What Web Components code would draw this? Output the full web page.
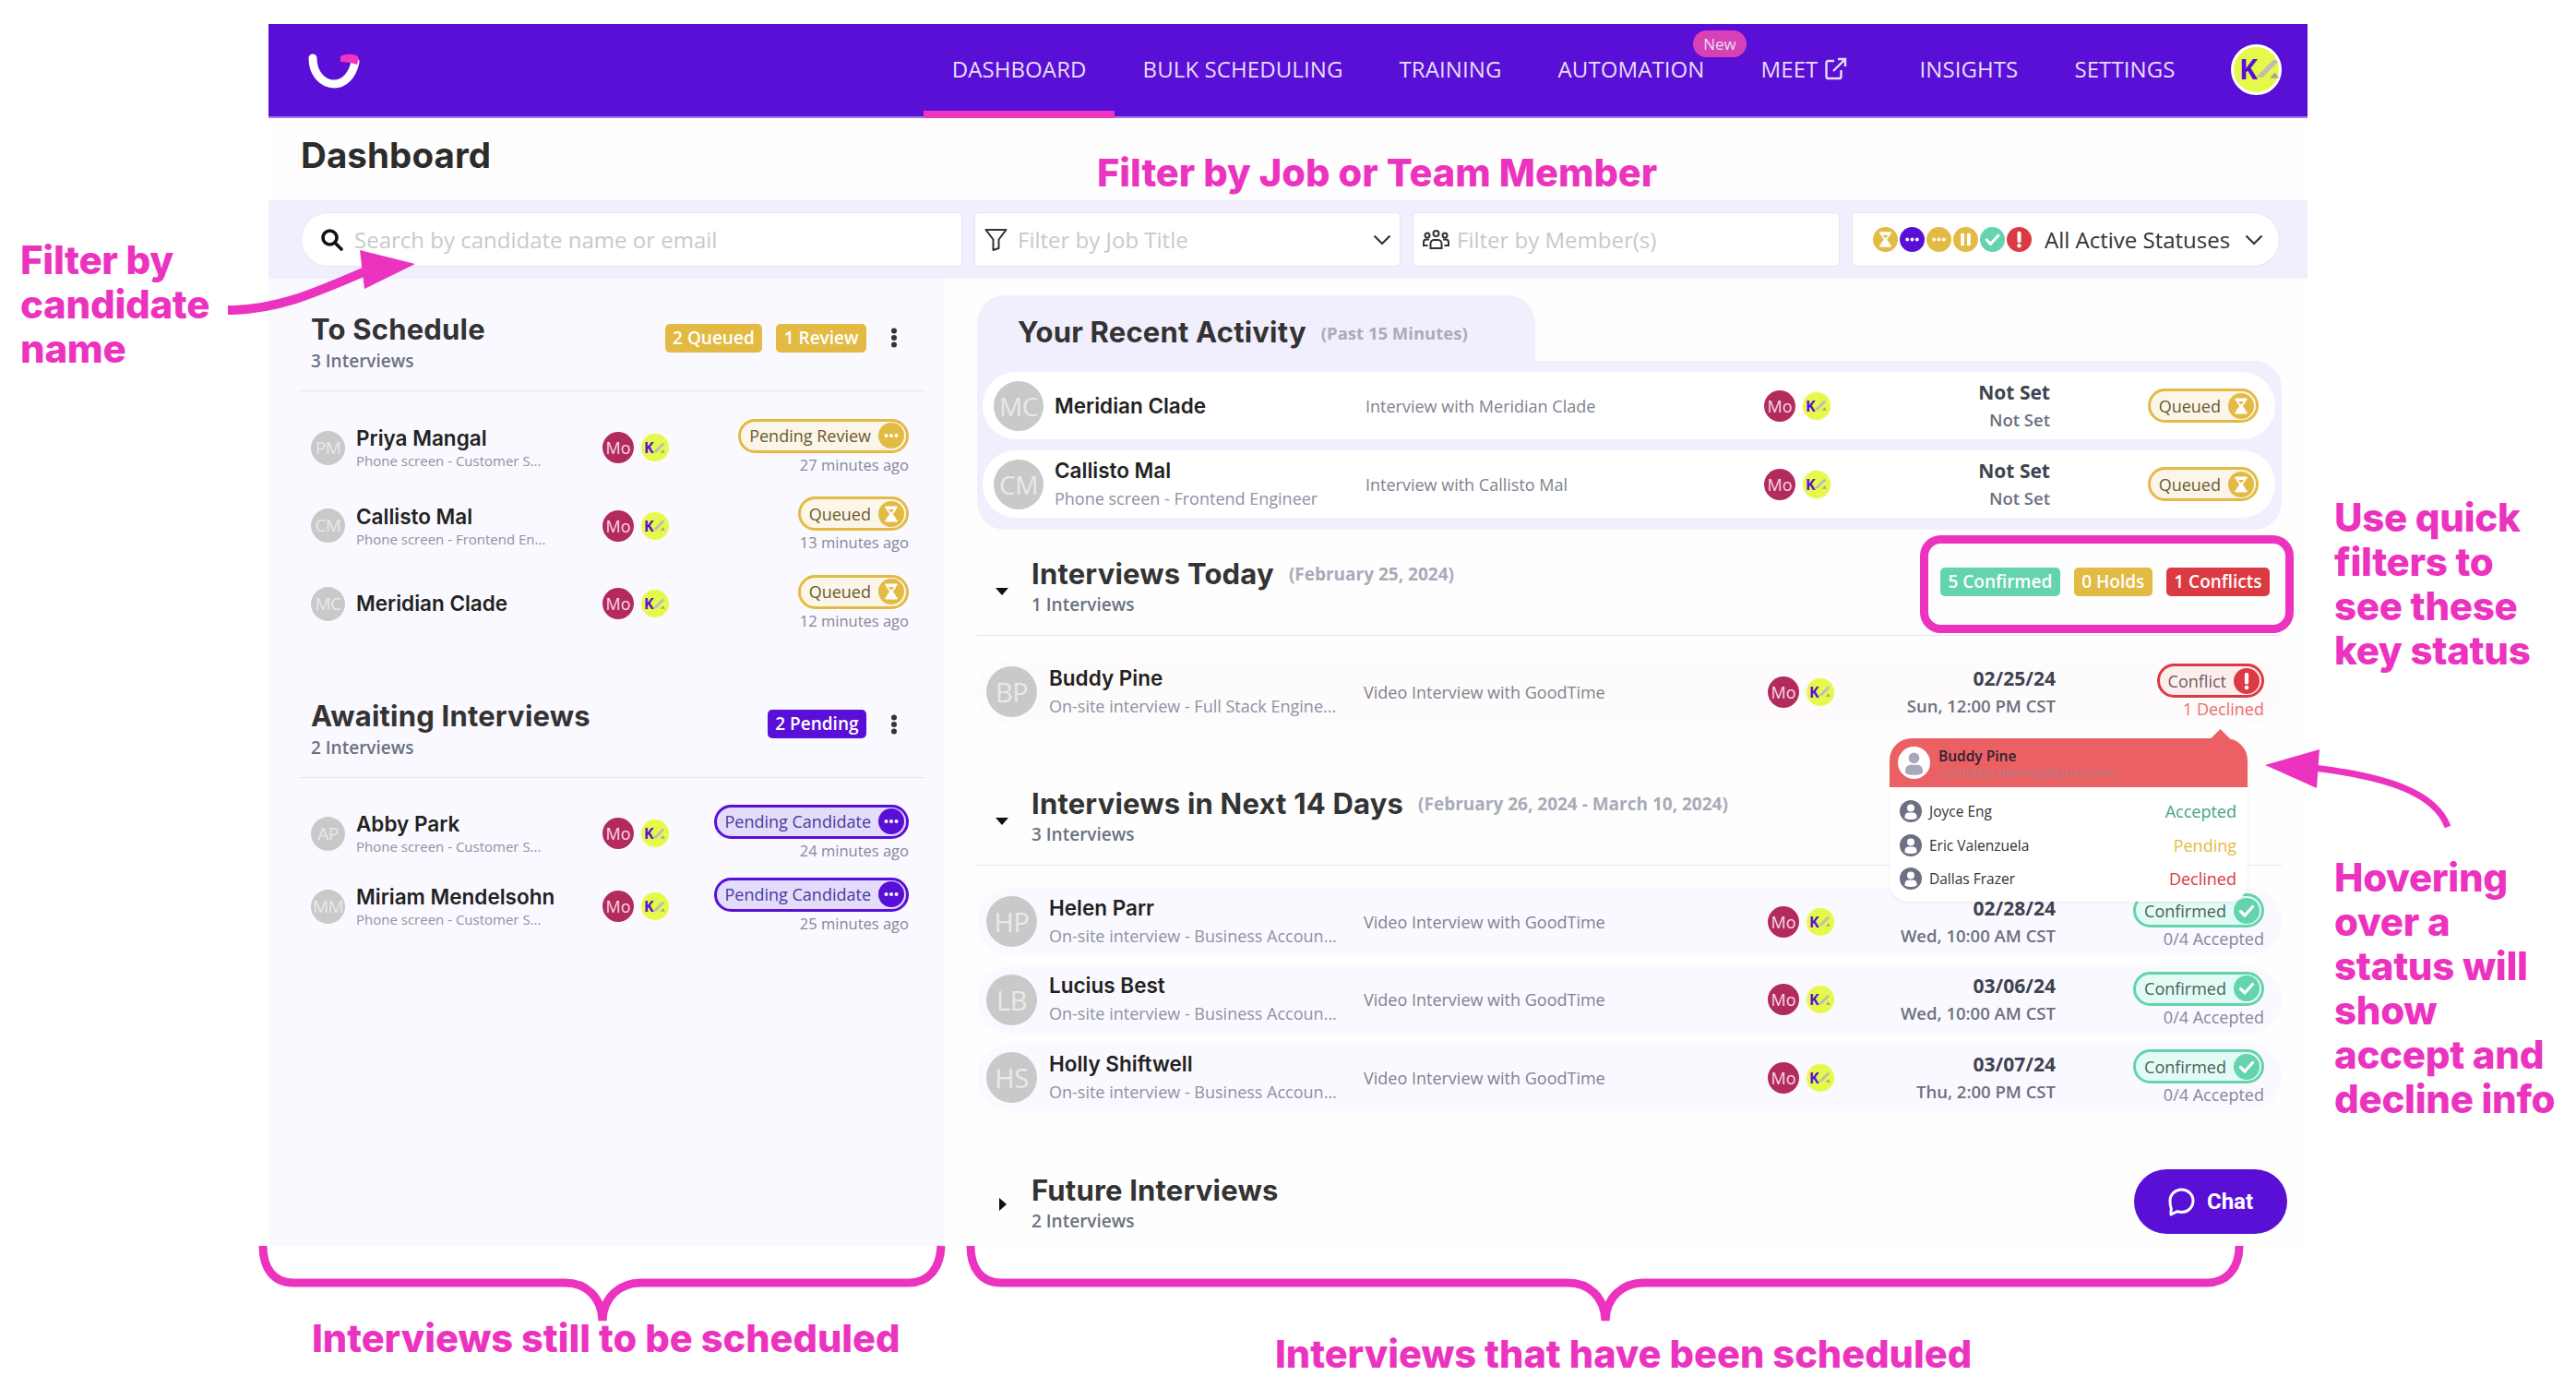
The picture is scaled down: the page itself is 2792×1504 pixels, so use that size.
<!DOCTYPE html>
<html lang="en">
<head>
<meta charset="utf-8">
<title>Dashboard</title>
<style>
  html, body { margin: 0; padding: 0; background: #fff; }
  body { position: relative; width: 2792px; height: 1504px; overflow: hidden; font-family: "Open Sans", "Noto Sans", sans-serif; color: #333; }
  .hdg-badges { display: flex; gap: 15px; align-items: center; }
</style>
</head>
<body>
<gt-app>
  <gt-nav slot="nav">
    <gt-nav-item active>DASHBOARD</gt-nav-item>
    <gt-nav-item>BULK SCHEDULING</gt-nav-item>
    <gt-nav-item>TRAINING</gt-nav-item>
    <gt-nav-item flag="New">AUTOMATION</gt-nav-item>
    <gt-nav-item external>MEET</gt-nav-item>
    <gt-nav-item>INSIGHTS</gt-nav-item>
    <gt-nav-item>SETTINGS</gt-nav-item>
  </gt-nav>

  <gt-filter-bar slot="filters"></gt-filter-bar>

  <gt-side-section slot="side" heading="To Schedule" count="3 Interviews" style="--row-h:84.5px;--head-top:37px;--rows-top:19px">
    <gt-badge slot="badges" color="#e3ba43">2 Queued</gt-badge>
    <gt-badge slot="badges" color="#e3ba43">1 Review</gt-badge>
    <gt-side-row initials="PM" name="Priya Mangal" sub="Phone screen - Customer S..." time="27 minutes ago"><gt-status slot="status" kind="review">Pending Review</gt-status></gt-side-row>
    <gt-side-row initials="CM" name="Callisto Mal" sub="Phone screen - Frontend En..." time="13 minutes ago"><gt-status slot="status" kind="queued">Queued</gt-status></gt-side-row>
    <gt-side-row initials="MC" name="Meridian Clade" time="12 minutes ago"><gt-status slot="status" kind="queued">Queued</gt-status></gt-side-row>
  </gt-side-section>

  <gt-side-section slot="side" heading="Awaiting Interviews" count="2 Interviews" style="--row-h:79px;--head-top:61px;--rows-top:21px">
    <gt-badge slot="badges" color="#5a0fd6">2 Pending</gt-badge>
    <gt-side-row initials="AP" name="Abby Park" sub="Phone screen - Customer S..." time="24 minutes ago"><gt-status slot="status" kind="candidate">Pending Candidate</gt-status></gt-side-row>
    <gt-side-row initials="MM" name="Miriam Mendelsohn" sub="Phone screen - Customer S..." time="25 minutes ago"><gt-status slot="status" kind="candidate">Pending Candidate</gt-status></gt-side-row>
  </gt-side-section>

  <gt-recent slot="main">
    <gt-row recent initials="MC" name="Meridian Clade" detail="Interview with Meridian Clade" date="Not Set" when="Not Set"><gt-status slot="status" kind="queued">Queued</gt-status></gt-row>
    <gt-row recent initials="CM" name="Callisto Mal" sub="Phone screen - Frontend Engineer" detail="Interview with Callisto Mal" date="Not Set" when="Not Set"><gt-status slot="status" kind="queued">Queued</gt-status></gt-row>
  </gt-recent>

  <gt-section slot="main" heading="Interviews Today" range="(February 25, 2024)" count="1 Interviews" style="--sec-top:30px">
    <div slot="badges" class="hdg-badges">
      <gt-badge color="#63d4ad">5 Confirmed</gt-badge>
      <gt-badge color="#e3ba43">0 Holds</gt-badge>
      <gt-badge color="#dc3a42">1 Conflicts</gt-badge>
    </div>
    <gt-row tint="#fdfbfb" initials="BP" name="Buddy Pine" sub="On-site interview - Full Stack Engine..." detail="Video Interview with GoodTime" date="02/25/24" when="Sun, 12:00 PM CST" note="1 Declined" notecolor="#ef6b6b"><gt-status slot="status" kind="conflict">Conflict</gt-status></gt-row>
  </gt-section>

  <gt-section slot="main" heading="Interviews in Next 14 Days" range="(February 26, 2024 - March 10, 2024)" count="3 Interviews" style="--sec-top:67px">
    <gt-row initials="HP" name="Helen Parr" sub="On-site interview - Business Accoun..." detail="Video Interview with GoodTime" date="02/28/24" when="Wed, 10:00 AM CST" note="0/4 Accepted"><gt-status slot="status" kind="confirmed">Confirmed</gt-status></gt-row>
    <gt-row initials="LB" name="Lucius Best" sub="On-site interview - Business Accoun..." detail="Video Interview with GoodTime" date="03/06/24" when="Wed, 10:00 AM CST" note="0/4 Accepted"><gt-status slot="status" kind="confirmed">Confirmed</gt-status></gt-row>
    <gt-row initials="HS" name="Holly Shiftwell" sub="On-site interview - Business Accoun..." detail="Video Interview with GoodTime" date="03/07/24" when="Thu, 2:00 PM CST" note="0/4 Accepted"><gt-status slot="status" kind="confirmed">Confirmed</gt-status></gt-row>
  </gt-section>

  <gt-section slot="main" closed heading="Future Interviews" count="2 Interviews" style="--sec-top:68px"></gt-section>

  <gt-popover slot="over" name="Buddy Pine" email="candidate.demogt@gmail.com">
    <gt-attendee name="Joyce Eng" state="Accepted" color="#3fa57f"></gt-attendee>
    <gt-attendee name="Eric Valenzuela" state="Pending" color="#e3ba43"></gt-attendee>
    <gt-attendee name="Dallas Frazer" state="Declined" color="#d83a44"></gt-attendee>
  </gt-popover>
  <gt-chat slot="over">Chat</gt-chat>
</gt-app>

<gt-notes></gt-notes>

<script>
const ICONS = {
  hourglass: `<path d="M7.500 5.500h13v2.500h-1.300c0 3-3.200 4.300-3.200 6s3.200 3 3.200 6h1.300v2.500h-13V20h1.300c0-3 3.200-4.300 3.200-6S8.800 11 8.800 8H7.500z" fill="#fff"/><path d="M11 9h6c-.4 1.500-2 2.400-3 3.500-1-1.100-2.600-2-3-3.500z" fill="currentColor"/>`,
  dots: `<circle cx="8.500" cy="14" r="2" fill="#fff"/><circle cx="14" cy="14" r="2" fill="#fff"/><circle cx="19.500" cy="14" r="2" fill="#fff"/>`,
  pause: `<rect x="8.500" y="7" width="4" height="14" rx="1" fill="#fff"/><rect x="15.500" y="7" width="4" height="14" rx="1" fill="#fff"/>`,
  check: `<path d="M7.500 14.500l4.500 4.500 8.500-9.500" fill="none" stroke="#fff" stroke-width="3.200" stroke-linecap="round" stroke-linejoin="round"/>`,
  bang: `<rect x="11.900" y="5" width="4.200" height="12.500" rx="1.800" fill="#fff"/><circle cx="14" cy="21" r="2.300" fill="#fff"/>`
};

const STATUS = {
  queued: { border: "#e3ba43", bg: "#fbf6e9", text: "#6b5a2c", icon: "hourglass" },
  review: { border: "#e3ba43", bg: "#fbf6e9", text: "#6b5a2c", icon: "dots" },
  candidate: { border: "#5a0fd6", bg: "#e3dcfb", text: "#4a3a9c", icon: "dots" },
  conflict: { border: "#dc3a42", bg: "#fdeeee", text: "#6e5c5e", icon: "bang" },
  confirmed: { border: "#63d4ad", bg: "#e3fbf5", text: "#47635b", icon: "check" }
};

function personSvg(bg, fg, size) {
  return `<svg width="${size}" height="${size}" viewBox="0 0 24 24"><circle cx="12" cy="12" r="12" fill="${bg}"/><circle cx="12" cy="8.500" r="4" fill="${fg}"/><path d="M5.500 19.500v-2c0-2.500 2-4 4-4h5c2 0 4 1.500 4 4v2c-2 1.300-4 1.600-6.500 1.600s-4.500-.3-6.500-1.600z" fill="${fg}"/></svg>`;
}

class GtApp extends HTMLElement {
  constructor() {
    super();
    this.attachShadow({ mode: "open" });
  }
  connectedCallback() {
    this.shadowRoot.innerHTML = `
      <style>
        :host { display: block; width: 2210px; height: 1324px; margin: 26px 0 0 291px; background: #fefefe; }
        .title { height: 89px; box-sizing: border-box; padding: 17px 0 0 35px; font: 700 38.500px/46px Inter, sans-serif; letter-spacing: .1px; color: #2c2c2c; }
        .content { display: grid; grid-template-columns: 732px 1478px; height: 1048px; }
        .side { background: #faf9ff; }
        .main { position: relative; padding: 18px 28px 0 36px; }
      </style>
      <slot name="nav"></slot>
      <div class="title">Dashboard</div>
      <slot name="filters"></slot>
      <div class="content">
        <div class="side"><slot name="side"></slot></div>
        <div class="main"><slot name="main"></slot><slot name="over"></slot></div>
      </div>
    `;
  }
}
customElements.define("gt-app", GtApp);

class GtNav extends HTMLElement {
  constructor() {
    super();
    this.attachShadow({ mode: "open" });
  }
  connectedCallback() {
    this.shadowRoot.innerHTML = `
      <style>
        :host { display: flex; align-items: stretch; height: 102px; box-sizing: border-box; background: #5a0fd6; border-bottom: 2px solid #9a78e6; padding: 0 28px 0 43px; }
        .logo { align-self: center; margin-top: 1px; }
        .items { display: flex; margin-left: auto; align-items: stretch; }
        .me { align-self: center; margin: -2px 0 0 30px; }
      </style>
      <svg class="logo" width="56" height="40" viewBox="0 0 56 40">
        <path d="M5 6c0 17 11 28 23 28 11 0 20-9 23-24" fill="none" stroke="#fff" stroke-width="9" stroke-linecap="round"/>
        <path d="M35 4c5-3 14-3 19 0 1 3 0 6-1 9-6-2-12-3-18-3z" fill="#ee35bf"/>
      </svg>
      <div class="items"><slot></slot></div>
      <gt-k-avatar class="me" size="55" ring></gt-k-avatar>
    `;
  }
}
customElements.define("gt-nav", GtNav);

class GtNavItem extends HTMLElement {
  constructor() {
    super();
    this.attachShadow({ mode: "open" });
  }
  connectedCallback() {
    const flag = this.getAttribute("flag");
    const ext = this.hasAttribute("external");
    this.shadowRoot.innerHTML = `
      <style>
        :host { display: flex; align-items: center; gap: 7px; position: relative; padding: 0 30.500px 4px; font: 400 24px "Open Sans", sans-serif; letter-spacing: .1px; color: #e6def8; white-space: nowrap; }
        :host([external]) { margin-right: 17px; }
        :host([active])::after { content: ""; position: absolute; left: 0; right: 0; bottom: -2px; height: 8px; background: #ee35bf; }
        .flag { position: absolute; top: 7px; right: -15px; width: 58px; height: 29px; border-radius: 14.500px; background: #d741b5; font-size: 17px; line-height: 29px; text-align: center; letter-spacing: 0; }
      </style>
      <slot></slot>
      ${flag ? `<span class="flag">${flag}</span>` : ""}
      ${ext ? `<svg width="25" height="25" viewBox="0 0 25 25" fill="none" stroke="#e6def8" stroke-width="2.400"><path d="M11 4H4.500a2 2 0 0 0-2 2v15a2 2 0 0 0 2 2h12a2 2 0 0 0 2-2v-7"/><path d="M10 15L22 3M15 2h8v8"/></svg>` : ""}
    `;
  }
}
customElements.define("gt-nav-item", GtNavItem);

class GtKAvatar extends HTMLElement {
  constructor() {
    super();
    this.attachShadow({ mode: "open" });
  }
  connectedCallback() {
    const s = Number(this.getAttribute("size") || 30);
    const ring = this.hasAttribute("ring");
    this.shadowRoot.innerHTML = `
      <style>
        :host { display: block; flex: none; }
        .c { width: ${s}px; height: ${s}px; box-sizing: border-box; border-radius: 50%; background: #e6f94a; display: flex; align-items: center; padding-left: ${Math.round(s * .1)}px; ${ring ? "border: 3px solid #fff;" : "box-shadow: 0 0 0 1px #fafbe6;"} }
        span { font: 700 ${Math.round(s * .54)}px/1 "Open Sans", sans-serif; color: #5a0fd6; }
        svg { flex: none; width: ${Math.round(s * .44)}px; height: ${Math.round(s * .44)}px; margin-left: -1px; }
      </style>
      <div class="c"><span>K</span>
        <svg viewBox="0 0 22 22"><path d="M0 18L15 3c1.500-1.500 3.500-1.500 5 0l1 1L6 19H1z" fill="#bdbdb4"/><path d="M13 20l5-6 4 6z" fill="#a3a69b"/></svg>
      </div>
    `;
  }
}
customElements.define("gt-k-avatar", GtKAvatar);

class GtTeam extends HTMLElement {
  constructor() {
    super();
    this.attachShadow({ mode: "open" });
  }
  connectedCallback() {
    this.shadowRoot.innerHTML = `
      <style>
        :host { display: flex; align-items: center; gap: 8px; }
        .mo { width: 34px; height: 34px; border-radius: 50%; background: #b32a5c; color: #f5dbe5; font-size: 18px; line-height: 34px; text-align: center; }
      </style>
      <div class="mo">Mo</div>
      <gt-k-avatar size="30"></gt-k-avatar>
    `;
  }
}
customElements.define("gt-team", GtTeam);

class GtAvatar extends HTMLElement {
  constructor() {
    super();
    this.attachShadow({ mode: "open" });
  }
  connectedCallback() {
    const s = Number(this.getAttribute("size") || 37);
    this.shadowRoot.innerHTML = `
      <style>
        :host { display: block; flex: none; }
        div { width: ${s}px; height: ${s}px; border-radius: 50%; background: #c9c9c9; color: #e9e9e9; font-size: ${Math.round(s * .52)}px; line-height: ${s}px; text-align: center; letter-spacing: -.5px; }
      </style>
      <div>${this.getAttribute("initials") || ""}</div>
    `;
  }
}
customElements.define("gt-avatar", GtAvatar);

class GtIcon extends HTMLElement {
  constructor() {
    super();
    this.attachShadow({ mode: "open" });
  }
  connectedCallback() {
    const c = this.getAttribute("color");
    const s = this.getAttribute("size") || 28;
    this.shadowRoot.innerHTML = `
      <style>:host { display: block; flex: none; width: ${s}px; height: ${s}px; color: ${c}; } svg { display: block; }</style>
      <svg width="${s}" height="${s}" viewBox="0 0 28 28"><circle cx="14" cy="14" r="14" fill="currentColor"/>${ICONS[this.getAttribute("name")]}</svg>
    `;
  }
}
customElements.define("gt-icon", GtIcon);

class GtStatus extends HTMLElement {
  constructor() {
    super();
    this.attachShadow({ mode: "open" });
  }
  connectedCallback() {
    const st = STATUS[this.getAttribute("kind")];
    this.shadowRoot.innerHTML = `
      <style>
        :host { display: inline-flex; align-items: center; gap: 8px; height: 37px; box-sizing: border-box; padding: 0 2px 0 9px; border: 3px solid ${st.border}; border-radius: 19px; background: ${st.bg}; color: ${st.text}; font: 400 18px "Open Sans", sans-serif; white-space: nowrap; }
      </style>
      <slot></slot>
      <gt-icon name="${st.icon}" color="${st.border}"></gt-icon>
    `;
  }
}
customElements.define("gt-status", GtStatus);

class GtBadge extends HTMLElement {
  constructor() {
    super();
    this.attachShadow({ mode: "open" });
  }
  connectedCallback() {
    this.shadowRoot.innerHTML = `
      <style>
        :host { display: block; height: 31px; padding: 0 8.500px; border-radius: 5px; background: ${this.getAttribute("color")}; color: #fff; font: 600 19px/30px "Open Sans", sans-serif; white-space: nowrap; }
      </style>
      <slot></slot>
    `;
  }
}
customElements.define("gt-badge", GtBadge);

class GtField extends HTMLElement {
  constructor() {
    super();
    this.attachShadow({ mode: "open" });
  }
  connectedCallback() {
    this.shadowRoot.innerHTML = `
      <style>
        :host { display: flex; align-items: center; box-sizing: border-box; height: 59px; background: #fff; border: 1px solid #e6e6ee; border-radius: 5px; color: #c9c9c9; font: 400 24px "Open Sans", sans-serif; white-space: nowrap; }
        :host([shape=left]) { border-radius: 30px 5px 5px 30px; }
        :host([shape=right]) { border-radius: 5px 30px 30px 5px; }
      </style>
      <slot></slot>
    `;
  }
}
customElements.define("gt-field", GtField);

class GtFilterBar extends HTMLElement {
  constructor() {
    super();
    this.attachShadow({ mode: "open" });
  }
  connectedCallback() {
    const chevron = `<svg class="chev" width="20" height="12" viewBox="0 0 20 12" fill="none" stroke="#333" stroke-width="2.200"><path d="M1.500 1.500L10 10l8.500-8.500"/></svg>`;
    this.shadowRoot.innerHTML = `
      <style>
        :host { display: grid; grid-template-columns: 717px 462px 463px 464px; gap: 13px; height: 85px; box-sizing: border-box; padding: 13px 0 0 35px; background: #f1effd; }
        gt-field svg { flex: none; }
        .chev { margin-left: auto; margin-right: 9px; }
        .icons { display: flex; gap: 2px; margin-right: 14px; }
        .sel { color: #333; }
        #s { padding-left: 20px; gap: 12px; }
        #j { padding-left: 10px; gap: 11px; }
        #m { padding-left: 10px; gap: 8px; }
        #a { padding-left: 22px; }
        #a .chev { margin: 0 0 0 16px; }
      </style>
      <gt-field id="s" shape="left">
        <svg width="25" height="25" viewBox="0 0 25 25" fill="none" stroke="#111" stroke-width="3.600"><circle cx="10.500" cy="10.500" r="7.500"/><path d="M16 16l7 7" stroke-linecap="round"/></svg>
        <span>Search by candidate name or email</span>
      </gt-field>
      <gt-field id="j">
        <svg width="25" height="25" viewBox="0 0 25 25" fill="none" stroke="#333" stroke-width="2"><path d="M1.500 2h22l-8 10.500V22l-6 2V12.500z" stroke-linejoin="round"/></svg>
        <span>Filter by Job Title</span>
        ${chevron}
      </gt-field>
      <gt-field id="m">
        <svg width="29" height="22" viewBox="0 0 29 22" fill="none" stroke="#333" stroke-width="2"><circle cx="14.500" cy="4" r="3"/><circle cx="5" cy="6" r="2.500"/><circle cx="24" cy="6" r="2.500"/><path d="M8.500 20v-5c0-2.500 2-4 4-4h4c2 0 4 1.500 4 4v5z"/><path d="M5.500 17H1v-3.500C1 11.500 2.500 10.500 4 10.500h3M23.500 17H28v-3.500c0-2-1.500-3-3-3h-3"/></svg>
        <span>Filter by Member(s)</span>
      </gt-field>
      <gt-field id="a" shape="right">
        <div class="icons">
          <gt-icon name="hourglass" color="#e3ba43" size="27"></gt-icon>
          <gt-icon name="dots" color="#5a0fd6" size="27"></gt-icon>
          <gt-icon name="dots" color="#e3ba43" size="27"></gt-icon>
          <gt-icon name="pause" color="#e3ba43" size="27"></gt-icon>
          <gt-icon name="check" color="#63d4ad" size="27"></gt-icon>
          <gt-icon name="bang" color="#dc3a42" size="27"></gt-icon>
        </div>
        <span class="sel">All Active Statuses</span>
        ${chevron}
      </gt-field>
    `;
  }
}
customElements.define("gt-filter-bar", GtFilterBar);

class GtSideSection extends HTMLElement {
  constructor() {
    super();
    this.attachShadow({ mode: "open" });
  }
  connectedCallback() {
    this.shadowRoot.innerHTML = `
      <style>
        :host { display: block; padding-top: var(--head-top); }
        .head { display: flex; align-items: center; margin: 0 20px 0 33px; padding: 0 30px 18px 13px; border-bottom: 1px solid #e7e7ef; }
        .t { flex: 1; }
        h2 { margin: 0; font: 700 31px/36px Inter, sans-serif; letter-spacing: .2px; color: #333; }
        p { margin: 2px 0 0; font: 600 19px/28px "Open Sans", sans-serif; color: #6b7280; }
        .badges { display: flex; gap: 15px; margin: 0 26px 12px 0; }
        svg { margin-bottom: 12px; }
        .rows { padding-top: var(--rows-top); }
      </style>
      <div class="head">
        <div class="t"><h2>${this.getAttribute("heading")}</h2><p>${this.getAttribute("count")}</p></div>
        <div class="badges"><slot name="badges"></slot></div>
        <svg width="8" height="22" viewBox="0 0 8 22" fill="#333"><circle cx="4" cy="3.500" r="3"/><circle cx="4" cy="11" r="3"/><circle cx="4" cy="18.500" r="3"/></svg>
      </div>
      <div class="rows"><slot></slot></div>
    `;
  }
}
customElements.define("gt-side-section", GtSideSection);

class GtSideRow extends HTMLElement {
  constructor() {
    super();
    this.attachShadow({ mode: "open" });
  }
  connectedCallback() {
    const sub = this.getAttribute("sub");
    this.shadowRoot.innerHTML = `
      <style>
        :host { display: flex; align-items: center; height: var(--row-h); padding: 0 38px 0 46px; }
        .who { width: 267px; flex: none; padding-left: 12px; }
        .name { font: 600 22.500px/28px Inter, sans-serif; color: #222; white-space: nowrap; }
        .sub { font: 400 15px/20px "Open Sans", sans-serif; color: #8f92a3; }
        .right { margin-left: auto; display: flex; flex-direction: column; align-items: flex-end; }
        .time { font: 400 16.500px/26px "Open Sans", sans-serif; color: #85889a; }
      </style>
      <gt-avatar size="37" initials="${this.getAttribute("initials")}"></gt-avatar>
      <div class="who"><div class="name">${this.getAttribute("name")}</div>${sub ? `<div class="sub">${sub}</div>` : ""}</div>
      <gt-team></gt-team>
      <div class="right"><slot name="status"></slot><div class="time">${this.getAttribute("time")}</div></div>
    `;
  }
}
customElements.define("gt-side-row", GtSideRow);

class GtRow extends HTMLElement {
  constructor() {
    super();
    this.attachShadow({ mode: "open" });
  }
  connectedCallback() {
    const recent = this.hasAttribute("recent");
    const sub = this.getAttribute("sub");
    const note = this.getAttribute("note");
    this.shadowRoot.innerHTML = `
      <style>
        :host { display: grid; align-items: center; height: 73px; box-sizing: border-box; border-radius: 36px; background: ${this.getAttribute("tint") || (recent ? "#fff" : "#faf9ff")};
          padding: ${recent ? "0 18px 0 12px" : "0 19px 0 10px"}; grid-template-columns: ${recent ? "53px 350px 432px 75px 235px 226px" : "55px 354px 438px 75px 237px 226px"}; }
        .who { padding-left: 13px; }
        .name { font: 600 22.500px/30px Inter, sans-serif; color: #222; white-space: nowrap; }
        .sub { font: 400 18px/30px "Open Sans", sans-serif; color: #8f92a3; white-space: nowrap; }
        .detail { font: 400 18px "Open Sans", sans-serif; color: #80838f; }
        .date { text-align: right; }
        .d1 { font: 700 21px/30px "Open Sans", sans-serif; color: #3f4350; }
        .d2 { font: 600 18.500px/30px "Open Sans", sans-serif; color: #6b7080; }
        .st { display: flex; flex-direction: column; align-items: flex-end; }
        .note { font: 400 18px/24px "Open Sans", sans-serif; color: ${this.getAttribute("notecolor") || "#85889a"}; }
      </style>
      <gt-avatar size="${recent ? 54 : 55}" initials="${this.getAttribute("initials")}"></gt-avatar>
      <div class="who"><div class="name">${this.getAttribute("name")}</div>${sub ? `<div class="sub">${sub}</div>` : ""}</div>
      <div class="detail">${this.getAttribute("detail")}</div>
      <gt-team></gt-team>
      <div class="date"><div class="d1">${this.getAttribute("date")}</div><div class="d2">${this.getAttribute("when")}</div></div>
      <div class="st"><slot name="status"></slot>${note ? `<div class="note">${note}</div>` : ""}</div>
    `;
  }
}
customElements.define("gt-row", GtRow);

class GtRecent extends HTMLElement {
  constructor() {
    super();
    this.attachShadow({ mode: "open" });
  }
  connectedCallback() {
    this.shadowRoot.innerHTML = `
      <style>
        :host { display: block; }
        .tab { display: flex; align-items: center; gap: 16px; width: 605px; height: 71px; box-sizing: border-box; padding: 9px 0 0 44px; background: #f1effd; border-radius: 30px 30px 0 0; }
        h2 { margin: 0; font: 700 31px/36px Inter, sans-serif; letter-spacing: .2px; color: #333; white-space: nowrap; }
        span { font: 700 18.500px "Open Sans", sans-serif; color: #a8abb8; white-space: nowrap; }
        .body { display: flex; flex-direction: column; gap: 12px; padding: 12px 7px 13px 6px; background: #f1effd; border-radius: 0 30px 30px 30px; }
      </style>
      <div class="tab"><h2>Your Recent Activity</h2><span>(Past 15 Minutes)</span></div>
      <div class="body"><slot></slot></div>
    `;
  }
}
customElements.define("gt-recent", GtRecent);

class GtSection extends HTMLElement {
  constructor() {
    super();
    this.attachShadow({ mode: "open" });
  }
  connectedCallback() {
    const closed = this.hasAttribute("closed");
    const range = this.getAttribute("range");
    this.shadowRoot.innerHTML = `
      <style>
        :host { display: block; padding-top: var(--sec-top); }
        .head { display: flex; align-items: center; padding-bottom: ${closed ? 0 : 19}px; ${closed ? "" : "border-bottom: 1px solid #e6e7ee;"} }
        .caret { width: 59px; flex: none; padding-left: 20px; box-sizing: border-box; }
        .caret i { display: block; width: 0; height: 0; ${closed
          ? "border-left: 8px solid #111; border-top: 7px solid transparent; border-bottom: 7px solid transparent; margin-left: 4px;"
          : "border-top: 8px solid #111; border-left: 7px solid transparent; border-right: 7px solid transparent;"} margin-top: ${closed ? 0 : 8}px; }
        .t { flex: 1; }
        .line { display: flex; align-items: center; gap: 16px; }
        h2 { margin: 0; font: 700 31px/36px Inter, sans-serif; letter-spacing: .2px; color: #333; white-space: nowrap; }
        .range { font: 700 19px "Open Sans", sans-serif; color: #a8abb8; white-space: nowrap; }
        p { margin: 1px 0 0; font: 600 19px/28px "Open Sans", sans-serif; color: #6b7280; }
        .right { padding-right: 13px; margin-bottom: 13px; }
        .rows { display: flex; flex-direction: column; gap: 11.500px; padding-top: ${closed ? 0 : 24}px; }
      </style>
      <div class="head">
        <div class="caret"><i></i></div>
        <div class="t"><div class="line"><h2>${this.getAttribute("heading")}</h2>${range ? `<span class="range">${range}</span>` : ""}</div><p>${this.getAttribute("count")}</p></div>
        <div class="right"><slot name="badges"></slot></div>
      </div>
      <div class="rows"><slot></slot></div>
    `;
  }
}
customElements.define("gt-section", GtSection);

class GtPopover extends HTMLElement {
  constructor() {
    super();
    this.attachShadow({ mode: "open" });
  }
  connectedCallback() {
    this.shadowRoot.innerHTML = `
      <style>
        :host { position: absolute; left: 1025px; top: 498px; width: 388px; height: 177px; background: #fff; border-radius: 24px 24px 20px 20px; box-shadow: 0 1px 3px rgba(0,0,0,.08); font-family: "Open Sans", sans-serif; }
        .tip { position: absolute; top: -7px; left: 351px; width: 15px; height: 15px; background: #eb6062; transform: rotate(45deg); }
        .head { position: relative; display: flex; align-items: center; gap: 9px; height: 53px; box-sizing: border-box; padding: 0 0 0 9px; background: #eb6062; border-radius: 24px 24px 0 0; }
        .pic { width: 35px; height: 35px; }
        .name { font-size: 15.500px; line-height: 19px; font-weight: 600; color: #2a2230; margin-top: 3px; }
        .mail { font-size: 13.500px; line-height: 17px; color: #b27a85; white-space: nowrap; }
        .list { padding-top: 8px; }
      </style>
      <div class="tip"></div>
      <div class="head">
        <div class="pic">${personSvg("#fff", "#a7a9b8", 35)}</div>
        <div><div class="name">${this.getAttribute("name")}</div><div class="mail">${this.getAttribute("email")}</div></div>
      </div>
      <div class="list"><slot></slot></div>
    `;
  }
}
customElements.define("gt-popover", GtPopover);

class GtAttendee extends HTMLElement {
  constructor() {
    super();
    this.attachShadow({ mode: "open" });
  }
  connectedCallback() {
    this.shadowRoot.innerHTML = `
      <style>
        :host { display: flex; align-items: center; gap: 8px; height: 36.500px; padding: 0 12px 0 11px; font: 400 15.500px "Open Sans", sans-serif; color: #333; }
        .state { margin-left: auto; font-size: 18px; color: ${this.getAttribute("color")}; }
        svg { display: block; }
      </style>
      ${personSvg("#6b7082", "#fff", 24)}
      <span>${this.getAttribute("name")}</span>
      <span class="state">${this.getAttribute("state")}</span>
    `;
  }
}
customElements.define("gt-attendee", GtAttendee);

class GtChat extends HTMLElement {
  constructor() {
    super();
    this.attachShadow({ mode: "open" });
  }
  connectedCallback() {
    this.shadowRoot.innerHTML = `
      <style>
        :host { position: absolute; right: 22px; bottom: 13px; display: flex; align-items: center; justify-content: center; gap: 13px; width: 166px; height: 70px; border-radius: 35px; background: #5a0fd6; color: #fff; font: 700 24px Roboto, sans-serif; }
      </style>
      <svg width="29" height="31" viewBox="0 0 29 31" fill="none" stroke="#fff" stroke-width="3" stroke-linejoin="round"><path d="M14.500 2C21 2 27 7 27 14c0 7.500-6 12.500-12.500 12.500-1.500 0-3-.2-4.500-.8L3 29c-.2-3 .2-5.500.3-6.500C2.200 20 2 17 2 14 2 7 8 2 14.500 2z"/></svg>
      <slot></slot>
    `;
  }
}
customElements.define("gt-chat", GtChat);

class GtNotes extends HTMLElement {
  constructor() {
    super();
    this.attachShadow({ mode: "open" });
  }
  connectedCallback() {
    const pink = "#ec33c0";
    this.shadowRoot.innerHTML = `
      <style>
        :host { position: absolute; left: 0; top: 0; width: 2792px; height: 1504px; color: ${pink}; font: 800 42px/48px Inter, sans-serif; letter-spacing: -.3px; pointer-events: none; }
        svg { position: absolute; left: 0; top: 0; }
        div { position: absolute; white-space: nowrap; }
        .one { font-size: 41.500px; line-height: 48px; letter-spacing: 0; }
      </style>
      <svg width="2792" height="1504" viewBox="0 0 2792 1504" fill="none">
        <path d="M247 336C300 336 340 318 396 294" stroke="${pink}" stroke-width="10"/>
        <path d="M390 271L450 286L395 313z" fill="${pink}"/>
        <path d="M2653 896C2640 860 2590 842 2508 832" stroke="${pink}" stroke-width="7"/>
        <path d="M2455 829L2514 812L2511 854z" fill="${pink}"/>
        <rect x="2085.500" y="584.500" width="396" height="97" rx="18" stroke="${pink}" stroke-width="9"/>
        <path d="M285 1350C285 1375 297 1390 318 1390L612 1390C635 1390 652 1405 653 1431C654 1405 672 1390 695 1390L985 1390C1006 1390 1019 1375 1020 1350" stroke="${pink}" stroke-width="9"/>
        <path d="M1052 1350C1052 1375 1064 1390 1085 1390L1699 1390C1722 1390 1739 1405 1740 1431C1741 1405 1759 1390 1782 1390L2392 1390C2413 1390 2427 1375 2427 1350" stroke="${pink}" stroke-width="9"/>
      </svg>
      <div class="one" style="left:1189px;top:163px">Filter by Job or Team Member</div>
      <div style="left:22px;top:258px">Filter by<br>candidate<br>name</div>
      <div style="left:2530px;top:537px">Use quick<br>filters to<br>see these<br>key status</div>
      <div style="left:2530px;top:927px">Hovering<br>over a<br>status will<br>show<br>accept and<br>decline info</div>
      <div class="one" style="left:338px;top:1426px">Interviews still to be scheduled</div>
      <div class="one" style="left:1382px;top:1443px">Interviews that have been scheduled</div>
    `;
  }
}
customElements.define("gt-notes", GtNotes);
</script>
</body>
</html>
